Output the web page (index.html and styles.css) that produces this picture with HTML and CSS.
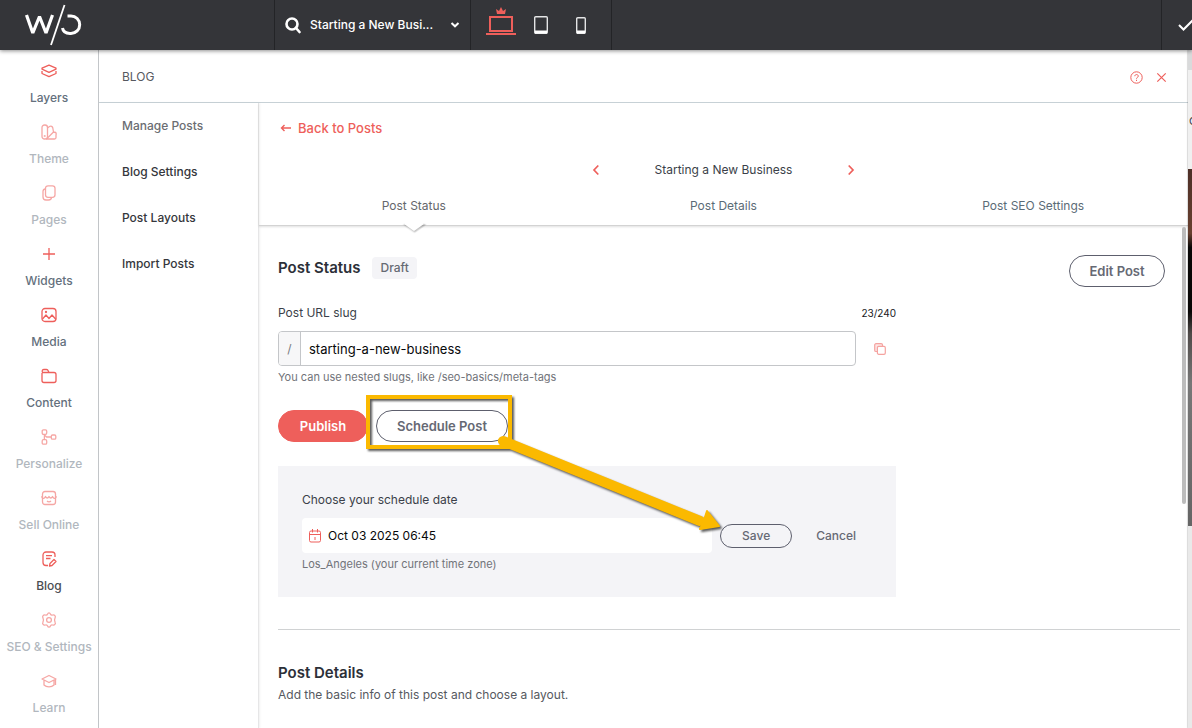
FILE: index.html
```html
<!DOCTYPE html>
<html lang="en">
<head>
<meta charset="utf-8">
<meta name="viewport" content="width=device-width, initial-scale=1">
<title>Blog</title>
<link rel="stylesheet" href="styles.css">
</head>
<body>
<div class="app">
  <header class="topbar">
    <a class="brand" href="#" aria-label="Home">
      <svg width="58" height="42" viewBox="0 0 58 42" fill="none" stroke="#fff" stroke-width="3.2"><path d="M2.500 11l6.300 18L15.500 12.500 22 29l6.500-18" stroke-linejoin="bevel"/><path d="M40.500 1L27 41" stroke-width="1.800"/><path d="M43.500 12h3.500a8.700 8.700 0 0 1 0 17.400h-1c-4 0-7-2-7.500-5.400" stroke-width="3"/></svg>
    </a>
    <div class="picker">
      <svg width="16" height="17" viewBox="0 0 16 17" fill="none" stroke="#fff" stroke-width="2.600" stroke-linecap="round"><circle cx="7" cy="7" r="5.500"/><path d="M11 11l3.500 4"/></svg>
      <select class="page-select" aria-label="Page"><option>Starting a New Busi...</option></select>
      <svg class="picker-chev" width="10" height="6" viewBox="0 0 10 6" fill="none" stroke="#fff" stroke-width="2"><path d="M1.500 1L5 4.300 8.500 1"/></svg>
    </div>
    <div class="devices">
      <button class="device" aria-label="Desktop"><svg width="30" height="30" viewBox="0 0 30 30" fill="none" stroke="#ee5f5b" stroke-width="2"><path d="M4 11h22v14H4z"/><path d="M0 28h30"/><path d="M11 8l-1-5 3 2 2-4 2 4 3-2-1 5z" fill="#ee5f5b" stroke="none"/></svg></button>
      <button class="device" aria-label="Tablet"><svg width="14" height="18" viewBox="0 0 14 18" fill="none" stroke="#e4e5e6"><rect x=".7" y=".7" width="12.600" height="16.600" rx="1" stroke-width="1.400"/><path d="M1 16h12" stroke="#fff" stroke-width="3"/></svg></button>
      <button class="device" aria-label="Phone"><svg width="10" height="17" viewBox="0 0 10 17" fill="none" stroke="#e4e5e6"><rect x=".7" y=".7" width="8.600" height="15.600" rx="1" stroke-width="1.400"/><path d="M1 15h8" stroke="#fff" stroke-width="3"/></svg></button>
    </div>
    <button class="confirm" aria-label="Save site"><svg width="18" height="14" viewBox="0 0 18 14" fill="none" stroke="#fff" stroke-width="2"><path d="M1 7l4.500 4.500L16 1"/></svg></button>
  </header>

  <div class="workspace">
    <nav class="rail">
      <a class="rail-item" href="#"><svg class="ico" viewBox="0 0 16 16"><path d="M8 2.200l7 3v1L8 9.300 1 6.200v-1z"/><path d="M1 8v2.500l7 3.200 7-3.200V8"/></svg>Layers</a>
      <a class="rail-item off" href="#"><svg class="ico" viewBox="0 0 16 16"><rect x="1" y="1" width="5.500" height="14" rx="2.500"/><path d="M6.500 4l2-1.500c1.500-1 3 0 3.300 1.500L12.500 8 6 14.500M12.500 8c2.500 0 3 1 2.500 3v2.500c0 1-.5 1.500-1.500 1.500H5"/><circle cx="3.700" cy="12" r=".4"/></svg>Theme</a>
      <a class="rail-item off" href="#"><svg class="ico" viewBox="0 0 16 16"><rect x="4.500" y=".8" width="9.500" height="11.500" rx="2.500"/><path d="M4.500 4C2.500 4 2 5 2 6.500V12c0 2 1 3 3 3h2.500c2 0 3-1 3-2.700"/></svg>Pages</a>
      <a class="rail-item" href="#"><svg class="ico" viewBox="0 0 16 16"><path d="M8 2v12M2 8h12"/></svg>Widgets</a>
      <a class="rail-item" href="#"><svg class="ico" viewBox="0 0 16 16"><rect x="1" y="1.500" width="14" height="13" rx="3"/><path d="M1.500 12l3.500-4 3 3.500L11 8l4 4.500"/><circle cx="5" cy="5" r=".5"/></svg>Media</a>
      <a class="rail-item" href="#"><svg class="ico" viewBox="0 0 16 16"><path d="M1 5v7.500a2 2 0 0 0 2 2h10a2 2 0 0 0 2-2V6.500a2 2 0 0 0-2-2H1.500c-.8-2 0-3 1.500-3h2.500c1.500 0 1.500 1 2.500 3"/></svg>Content</a>
      <a class="rail-item off" href="#"><svg class="ico" viewBox="0 0 16 16"><rect x="1.200" y=".8" width="4.500" height="4.500" rx="1.200"/><rect x="1.200" y="10.700" width="4.500" height="4.500" rx="1.200"/><rect x="10.300" y="6" width="4.500" height="4.200" rx="1.200"/><path d="M3.400 5.300v5.400M3.400 6l2.200 2h4.700"/></svg>Personalize</a>
      <a class="rail-item off" href="#"><svg class="ico" viewBox="0 0 16 16"><rect x="1.500" y="1.500" width="13" height="13" rx="2.500"/><path d="M1 6v1.500c1 1.500 2.500 1 3.500-1 1 2 2.500 2 3.500 0 1 2 2.500 2 3.500 0 1 2 2.500 2.500 3.500 1V6M6 11c1 1 3 1 4 0"/></svg>Sell Online</a>
      <a class="rail-item current" href="#"><svg class="ico" viewBox="0 0 16 16"><path d="M14 6V4a3 3 0 0 0-3-3H5a3 3 0 0 0-3 3v7.500a3 3 0 0 0 3 3h2M5 4.700h6M5 7.500h4.500M8.500 15l.5-2.500 4-4 2 2-4 4z"/></svg>Blog</a>
      <a class="rail-item off" href="#"><svg class="ico" viewBox="0 0 16 16"><path d="M6.600 2c.5-1.500 2.300-1.500 2.800 0 .5 1.200 1.200 1.400 2.300 1 1.800-.6 3.300 1.200 2.400 2.700-.9 1.700-.9 2.900 0 4.600.9 1.500-.6 3.300-2.400 2.700-1.100-.4-1.800-.2-2.300 1-.5 1.500-2.300 1.500-2.800 0-.5-1.200-1.200-1.400-2.300-1-1.800.6-3.300-1.200-2.400-2.700.9-1.700.9-2.900 0-4.600C1 4.200 2.500 2.400 4.300 3c1.100.4 1.800.2 2.300-1z"/><circle cx="8" cy="8" r="2.400"/></svg>SEO &amp; Settings</a>
      <a class="rail-item off" href="#"><svg class="ico" viewBox="0 0 16 16"><path d="M1 6l7-3.500L15 6 8 9.500zM3 7.500V12c2.500 2.500 7.500 2.500 10 0V7.500M14.500 6.500V12"/></svg>Learn</a>
    </nav>

    <section class="panel">
      <header class="panel-head">
        <h1 class="panel-title">BLOG</h1>
        <div class="panel-actions">
          <button class="plain" aria-label="Help"><svg width="13" height="13" viewBox="0 0 13 13" fill="none" stroke="#ee5f5b"><circle cx="6.500" cy="6.500" r="5.700"/><path d="M4.800 5.200c0-2.200 3.500-2.200 3.500 0 0 1.200-1.800 1.200-1.800 2.500M6.500 8.800v1.200"/></svg></button>
          <button class="plain" aria-label="Close"><svg width="11" height="11" viewBox="0 0 11 11" fill="none" stroke="#ee5f5b" stroke-width="1.200"><path d="M1.300 1.300l8.400 8.400M9.700 1.300L1.300 9.700"/></svg></button>
        </div>
      </header>
      <div class="panel-body">
        <nav class="subnav">
          <a class="subnav-item active" href="#">Manage Posts</a>
          <a class="subnav-item" href="#">Blog Settings</a>
          <a class="subnav-item" href="#">Post Layouts</a>
          <a class="subnav-item" href="#">Import Posts</a>
        </nav>
        <main class="main">
          <div class="main-head">
            <a class="back" href="#"><svg width="12" height="8" viewBox="0 0 12 8" fill="none" stroke="currentColor" stroke-width="1.400"><path d="M11 4H1.500M4.500 1l-3 3 3 3"/></svg>Back to Posts</a>
            <div class="pager">
              <button class="plain" aria-label="Previous post"><svg width="8" height="12" viewBox="0 0 8 12" fill="none" stroke="#ee5f5b" stroke-width="1.700"><path d="M6.300 1.500L2 6l4.300 4.500"/></svg></button>
              <span>Starting a New Business</span>
              <button class="plain" aria-label="Next post"><svg width="8" height="12" viewBox="0 0 8 12" fill="none" stroke="#ee5f5b" stroke-width="1.700"><path d="M1.700 1.500L6 6l-4.300 4.500"/></svg></button>
            </div>
            <div class="tabs">
              <a class="tab selected" href="#">Post Status</a>
              <a class="tab" href="#">Post Details</a>
              <a class="tab" href="#">Post SEO Settings</a>
            </div>
          </div>
          <div class="content">
            <section class="status">
              <div class="status-head">
                <h2 class="heading">Post Status</h2><span class="badge">Draft</span>
                <button class="btn outline edit">Edit Post</button>
              </div>
              <div class="form">
                <div class="label-row"><label for="slug">Post URL slug</label><span class="counter">23/240</span></div>
                <div class="slug-row">
                  <div class="slug-box"><span class="slash">/</span><input id="slug" class="slug-input" type="text" value="starting-a-new-business"></div>
                  <button class="plain copy" aria-label="Copy"><svg width="12" height="12" viewBox="0 0 12 12" fill="none" stroke="#f5a3a0" stroke-width="1.200"><path d="M3.300 8.500H2A1.300 1.300 0 0 1 .7 7.200V2A1.300 1.300 0 0 1 2 .7h5.200A1.300 1.300 0 0 1 8.500 2v1.300" fill="#fde6e5"/><rect x="3.400" y="3.400" width="7.900" height="7.900" rx="1.300" fill="#fff"/></svg></button>
                </div>
                <p class="hint">You can use nested slugs, like /seo-basics/meta-tags</p>
                <div class="btn-row">
                  <button class="btn solid">Publish</button>
                  <button class="btn outline">Schedule Post</button>
                  <svg class="note" width="364" height="150" viewBox="0 0 364 150" aria-hidden="true"><g fill="none" stroke="#fbb900"><path d="M6 6h142v50H6z" stroke-width="4"/><path d="M141 50l197 80" stroke-width="10" stroke-linecap="round"/></g><path d="M345 120l12 15-19 3 3-6z" fill="#fbb900" stroke="#fbb900" stroke-width="2" stroke-linejoin="round"/></svg>
                </div>
                <div class="schedule">
                  <label class="schedule-label" for="date">Choose your schedule date</label>
                  <div class="schedule-row">
                    <div class="date-box"><svg width="12" height="14" viewBox="0 0 12 14" fill="none" stroke="#ee5f5b"><rect x=".5" y="2" width="11" height="11" rx="1.500"/><path d="M.5 5.500h11M3.500 0v3.500M8.500 0v3.500M6 8v3"/></svg><input id="date" class="date-input" type="text" value="Oct 03 2025 06:45"></div>
                    <button class="btn outline small">Save</button>
                    <button class="plain cancel">Cancel</button>
                  </div>
                  <p class="hint">Los_Angeles (your current time zone)</p>
                </div>
              </div>
            </section>
            <section class="details">
              <h2 class="heading">Post Details</h2>
              <p>Add the basic info of this post and choose a layout.</p>
            </section>
            <div class="scroll-thumb"></div>
          </div>
        </main>
      </div>
    </section>
    <aside class="preview">
      <div class="preview-bar"></div>
      <div class="preview-menu">C</div>
      <div class="preview-photo"></div>
    </aside>
  </div>
</div>
</body>
</html>
```
FILE: styles.css
```css
* { box-sizing: border-box; }
body {
  margin: 0;
  font: 400 12px/18px Inter, "Liberation Sans", sans-serif;
  color: #3b3f49;
  background: #fff;
}
h1, h2, p { margin: 0; }
a { color: inherit; text-decoration: none; }
button, input, select { font: inherit; color: inherit; }
button { cursor: pointer; }
svg { display: block; flex: none; }
.app { display: flex; flex-direction: column; height: 100vh; overflow: hidden; }
.plain { display: flex; padding: 0; border: 0; background: none; }

.topbar {
  display: flex;
  flex: none;
  height: 50px;
  background: #343539;
  color: #fff;
  box-shadow: 0 1px 4px rgba(0, 0, 0, .45);
  z-index: 1;
}
.brand { flex: none; width: 274px; padding: 4px 24px; }
.picker {
  display: flex;
  align-items: center;
  width: 197px;
  padding: 0 10px;
  border-left: 1px solid #232427;
  border-right: 1px solid #232427;
}
.page-select {
  flex: 1;
  min-width: 0;
  margin-left: 9px;
  padding: 0;
  border: 0;
  background: none;
  appearance: none;
  font-size: 12px;
  font-weight: 500;
}
.devices {
  display: flex;
  align-items: center;
  width: 141px;
  padding-left: 10px;
  border-right: 1px solid #232427;
}
.device {
  display: flex;
  justify-content: center;
  align-items: center;
  width: 40px;
  height: 50px;
  padding: 0;
  border: 0;
  background: none;
}
.device:first-child { padding-bottom: 8px; }
.confirm {
  width: 31px;
  margin-left: auto;
  padding: 0 0 0 16px;
  border: 0;
  border-left: 1px solid #232427;
  background: none;
  overflow: hidden;
}

.workspace { display: flex; flex: 1; min-height: 0; }
.rail { flex: none; width: 99px; border-right: 1px solid #c3c6c9; }
.rail-item {
  display: flex;
  flex-direction: column;
  align-items: center;
  gap: 10px;
  padding: 13px 0 4px;
  color: #64707d;
  font-weight: 500;
  white-space: nowrap;
}
.rail-item.off { color: #b1b7be; }
.rail-item.current { color: #4b4d52; }
.ico { width: 16px; height: 16px; fill: none; stroke: #ee5f5b; stroke-width: 1.3; stroke-linejoin: round; }
.off .ico { opacity: .55; }

.panel { display: flex; flex-direction: column; flex: 1; min-width: 0; }
.panel-head {
  display: flex;
  justify-content: space-between;
  align-items: center;
  height: 53px;
  padding: 2px 21px 0 23px;
  border-bottom: 1px solid #c9d3d8;
}
.panel-title { font-size: 12px; font-weight: 400; color: #565960; }
.panel-actions { display: flex; align-items: center; gap: 13px; }
.panel-body { display: flex; flex: 1; min-height: 0; }
.subnav {
  flex: none;
  width: 160px;
  border-right: 1px solid #e6e6e7;
  box-shadow: 1px 0 2px rgba(0, 0, 0, .06);
}
.subnav-item {
  display: block;
  padding: 14px 23px;
  font-weight: 500;
  color: #35373c;
}
.subnav-item.active { color: #6b6d72; }

.main { display: flex; flex-direction: column; flex: 1; min-width: 0; }
.main-head {
  padding-top: 16px;
  border-bottom: 1px solid #d3d3d3;
  box-shadow: 0 1px 2px rgba(0, 0, 0, .12);
}
.back {
  display: flex;
  align-items: center;
  gap: 6px;
  padding-left: 21px;
  font-size: 13px;
  font-weight: 500;
  color: #ee5f5b;
}
.pager {
  display: flex;
  justify-content: space-between;
  align-items: center;
  width: 264px;
  margin: 24px auto 0;
}
.tabs { display: grid; grid-template-columns: repeat(3, 1fr); margin-top: 18px; color: #5b6b76; }
.tab { position: relative; padding-bottom: 10px; text-align: center; }
.tab.selected { color: #65676c; }
.tab.selected::after {
  content: "";
  position: absolute;
  left: calc(50% - 8px);
  bottom: -6px;
  width: 16px;
  height: 16px;
  background: #fff;
  box-shadow: 2px 1px 2px rgba(0, 0, 0, .25);
  transform: scaleY(.7) rotate(45deg);
  clip-path: polygon(120% -10%, 120% 120%, -10% 120%);
}
.content { position: relative; flex: 1; min-height: 0; padding: 29px 8px 0 19px; overflow: hidden; }
.status { padding-bottom: 32px; border-bottom: 1px solid #d0d2d3; }
.status-head { display: flex; align-items: flex-start; gap: 12px; padding-right: 15px; }
.heading { font-size: 15px; line-height: 26px; font-weight: 600; color: #2c2f38; }
.badge {
  margin-top: 2px;
  padding: 2px 8px;
  border-radius: 4px;
  background: #f4f4f7;
  font-weight: 500;
  color: #666a73;
}
.btn {
  height: 32px;
  padding: 0 18px;
  border: 1px solid #5d5f6d;
  border-radius: 16px;
  background: #fff;
  color: #666974;
  font-size: 13px;
  font-weight: 600;
  white-space: nowrap;
}
.btn.solid { min-width: 90px; border-color: #ee5f5b; background: #ee5f5b; color: #fff; }
.edit { min-width: 96px; margin-left: auto; }
.form { max-width: 618px; margin-top: 17px; }
.label-row { display: flex; justify-content: space-between; }
.counter { font-size: 10px; color: #17181b; }
.slug-row { display: flex; align-items: center; margin-top: 9px; }
.slug-box {
  display: flex;
  flex: 1;
  height: 35px;
  border: 1px solid #c4c6c9;
  border-radius: 4px;
  overflow: hidden;
}
.slash {
  width: 22px;
  border-right: 1px solid #c4c6c9;
  background: #f7f7f8;
  line-height: 33px;
  text-align: center;
  color: #777a80;
}
.slug-input, .date-input { flex: 1; min-width: 0; padding: 0 8px; border: 0; background: none; color: #08090a; }
.slug-input { font-size: 13px; }
.copy { margin: 0 10px 0 18px; }
.hint { margin-top: 2px; font-size: 11px; color: #717379; }
.btn-row { position: relative; display: flex; gap: 8px; margin-top: 24px; }
.btn-row .outline { min-width: 132px; }
.note {
  position: absolute;
  left: 84px;
  top: -19px;
  pointer-events: none;
  filter: drop-shadow(2px 2px 1px rgba(0, 0, 0, .65));
  overflow: visible;
}
.schedule { margin-top: 24px; padding: 25px 24px 24px; background: #f4f4f7; }
.schedule-label { display: block; }
.schedule-row { display: flex; align-items: center; margin-top: 9px; }
.date-box {
  display: flex;
  flex: 1;
  align-items: center;
  height: 35px;
  margin-right: 8px;
  padding-left: 7px;
  border-radius: 4px;
  background: #fff;
}
.date-input { padding-left: 7px; }
.small { width: 72px; height: 24px; padding: 0; background: #f4f4f7; font-size: 12px; font-weight: 500; }
.cancel { margin: 0 16px 0 24px; font-weight: 500; color: #666974; }
.details { padding-top: 30px; color: #565960; }
.scroll-thumb { position: absolute; top: 1px; right: 2px; width: 4px; height: 277px; border-radius: 2px; background: #bcbcbc; }

.preview { flex: none; width: 4px; background: #e9e9e9; overflow: hidden; box-shadow: -1px 0 1px rgba(0, 0, 0, .15); }
.preview-bar { height: 20px; background: #d9dadb; }
.preview-menu { height: 99px; padding: 42px 0 0 1px; font-size: 11px; background: #f0f0f0; }
.preview-photo {
  height: 357px;
  background: linear-gradient(#4d2f27 0, #68402f 18%, #080706 22%, #080706 40%, #4f4a48 46%, #777 60%, #656565 100%);
}
```
